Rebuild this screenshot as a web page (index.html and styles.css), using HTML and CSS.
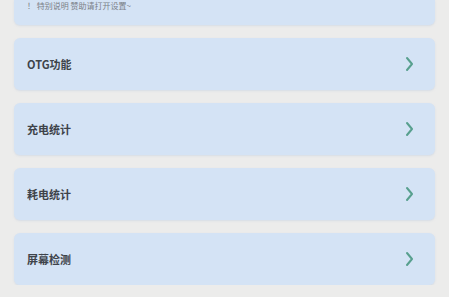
FILE: index.html
```html
<!DOCTYPE html>
<html lang="zh">

<head>
    <meta charset="UTF-8" />
    <meta name="viewport" content="width=device-width, initial-scale=1.0" />
    <title>设置</title>
    <link rel="stylesheet" href="styles.css">
</head>

<body>
    <div class="list">
        <div class="card notice">
            <p>！ 特别说明 赞助请打开设置~</p>
        </div>
        <div class="card item">
            <span class="label">OTG功能</span>
            <svg class="arrow" width="9" height="16" viewBox="0 0 9 16">
                <polyline points="2,2 7,8 2,14" />
            </svg>
        </div>
        <div class="card item">
            <span class="label">充电统计</span>
            <svg class="arrow" width="9" height="16" viewBox="0 0 9 16">
                <polyline points="2,2 7,8 2,14" />
            </svg>
        </div>
        <div class="card item">
            <span class="label">耗电统计</span>
            <svg class="arrow" width="9" height="16" viewBox="0 0 9 16">
                <polyline points="2,2 7,8 2,14" />
            </svg>
        </div>
        <div class="card item">
            <span class="label">屏幕检测</span>
            <svg class="arrow" width="9" height="16" viewBox="0 0 9 16">
                <polyline points="2,2 7,8 2,14" />
            </svg>
        </div>
    </div>
</body>

</html>
```

FILE: styles.css
```css
* {
    box-sizing: border-box;
    margin: 0;
    padding: 0;
}

body {
    font-family: "Noto Sans CJK SC", "Noto Sans", sans-serif;
    background: #ececeb;
    color: #3e434a;
    overflow: hidden;
}

.list {
    display: flex;
    flex-direction: column;
    gap: 13px;
    padding: 0 14px;
}

.card {
    background: #d4e3f5;
    border-radius: 6px;
    box-shadow: 0 1px 2px rgba(200, 210, 225, 0.6);
}

.notice {
    border-radius: 0 0 6px 6px;
    height: 25px;
    padding: 0 13px;
}

.notice p {
    font-size: 8px;
    line-height: 12px;
    color: #7b8087;
}

.item {
    height: 52px;
    display: flex;
    align-items: center;
    justify-content: space-between;
    padding: 0 21px 0 13px;
}

.label {
    font-size: 11px;
    font-weight: 600;
}

.arrow polyline {
    fill: none;
    stroke: #58a08e;
    stroke-width: 2;
    stroke-linecap: round;
    stroke-linejoin: round;
}
```
